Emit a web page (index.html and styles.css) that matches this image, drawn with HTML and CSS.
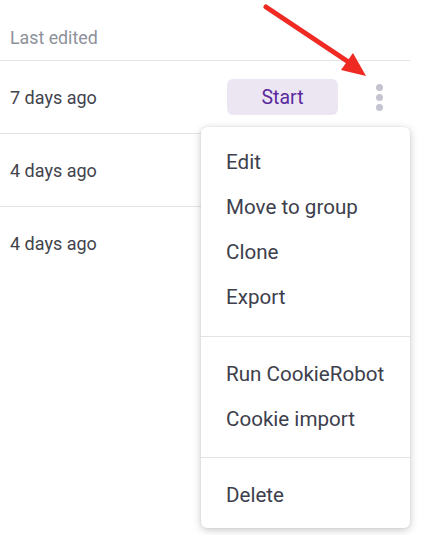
FILE: index.html
```html
<!DOCTYPE html>
<html>
<head>
<meta charset="utf-8">
<link rel="stylesheet" href="styles.css">
</head>
<body>
<div class="table">
  <div class="head">Last edited</div>
  <div class="row">
    <span class="date">7 days ago</span>
    <div class="actions">
      <button class="start">Start</button>
      <div class="kebab"><i></i><i></i><i></i></div>
    </div>
  </div>
  <div class="row"><span class="date">4 days ago</span></div>
  <div class="row"><span class="date">4 days ago</span></div>
</div>
<div class="menu">
  <div class="group">
    <div class="item">Edit</div>
    <div class="item">Move to group</div>
    <div class="item">Clone</div>
    <div class="item">Export</div>
  </div>
  <div class="group">
    <div class="item">Run CookieRobot</div>
    <div class="item">Cookie import</div>
  </div>
  <div class="group">
    <div class="item">Delete</div>
  </div>
</div>
<svg class="arrow" width="427" height="90" viewBox="0 0 427 90">
  <line x1="266" y1="7" x2="350" y2="63" stroke="#ee2a22" stroke-width="5" stroke-linecap="round"/>
  <polygon points="341,70 353,53 366,76" fill="#ee2a22"/>
</svg>
</body>
</html>
```
FILE: styles.css
```css
html, body {
  margin: 0;
  padding: 0;
  background: #fff;
  font-family: Roboto, "Noto Sans", sans-serif;
}
body {
  position: relative;
  width: 427px;
  height: 535px;
  overflow: hidden;
}
.table {
  width: 410px;
}
.head {
  height: 61px;
  box-sizing: border-box;
  padding: 27px 0 0 10px;
  font-size: 17.8px;
  color: #8d919b;
  border-bottom: 1px solid #e2e3e6;
}
.row {
  height: 73px;
  box-sizing: border-box;
  border-bottom: 1px solid #e2e3e6;
  display: flex;
  align-items: center;
  justify-content: space-between;
  padding-left: 10px;
}
.row:last-child {
  border-bottom: 0;
}
.date {
  font-size: 18px;
  color: #41434c;
}
.actions {
  display: flex;
  align-items: center;
}
.start {
  width: 111px;
  height: 36px;
  border: 0;
  border-radius: 6px;
  background: #ece6f3;
  color: #5a2a9e;
  font-family: Roboto, sans-serif;
  font-size: 19.5px;
  padding: 0;
}
.kebab {
  width: 8px;
  display: flex;
  flex-direction: column;
  gap: 3px;
  margin: 0 26px 0 38px;
}
.kebab i {
  display: block;
  width: 7px;
  height: 7px;
  border-radius: 50%;
  background: #c3c4cf;
}
.menu {
  position: absolute;
  left: 201px;
  top: 127px;
  width: 209px;
  height: 401px;
  box-sizing: border-box;
  background: #fff;
  border-radius: 6px;
  box-shadow: 0 2px 8px rgba(0,0,0,0.22), 0 0 2px rgba(0,0,0,0.08);
}
.group {
  padding: 15px 0 15px;
  border-bottom: 1px solid #e2e3e6;
}
.group:first-child {
  padding: 13px 0 16px;
}
.group:last-child {
  border-bottom: 0;
  padding-bottom: 10px;
}
.item {
  height: 45px;
  line-height: 45px;
  padding-left: 25px;
  font-size: 20.6px;
  color: #3d404c;
}
.arrow {
  position: absolute;
  left: 0;
  top: 0;
}
```
